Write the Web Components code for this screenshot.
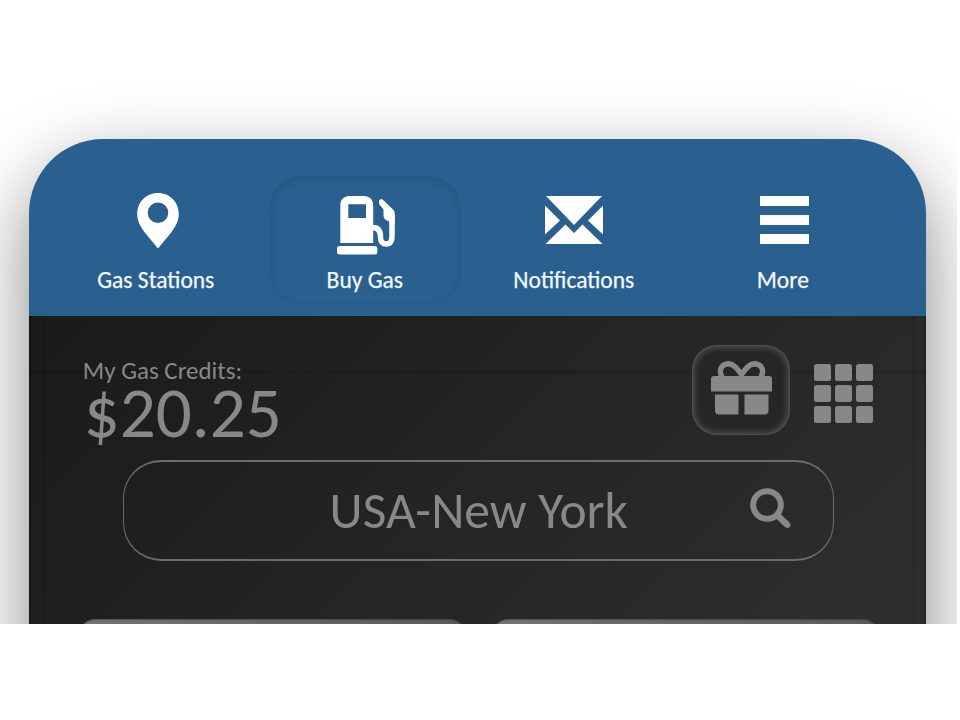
<!DOCTYPE html>
<html lang="en">
<head>
<meta charset="utf-8">
<title>Gas Credits</title>
<style>
  body { margin: 0; background: #fff; font-family: Carlito, Calibri, Lato, sans-serif; }
</style>
</head>
<body>
<gas-app></gas-app>
<script>
const icons = {
  pin: '<svg width="42" height="56" viewBox="0 0 42 56"><path fill="#fff" fill-rule="evenodd" d="M21 0C9.200 0 .2 9 .2 21c0 7 3.200 12.500 7.600 18.500L21 55.500l13.200-16C38.600 33.500 41.800 28 41.800 21 41.800 9 32.800 0 21 0zM21 9.500a10.300 10.300 0 1 1 0 20.600a10.300 10.300 0 0 1 0-20.600z"/></svg>',
  pump: '<svg width="58" height="59" viewBox="0 0 58 59"><path fill="#fff" fill-rule="evenodd" d="M3.300 47V9.500C3.300 3.500 7 0 12.500 0H27c5.500 0 9.200 3.500 9.200 9.500V47zM11.300 8.200V22H29V8.200z"/><rect x="0" y="50" width="40.300" height="8.500" rx="2.500" fill="#fff"/><path d="M36 31.500C42 31.500 43.500 36 43.500 41S45.500 48 49.500 48 55.200 44.500 55 39V19.500L44.500 6.500" fill="none" stroke="#fff" stroke-width="5.500" stroke-linejoin="round"/><path fill="#fff" d="M42 6.500Q41.500 3 45 3L56.500 14Q57.800 15.500 57.800 18V28H52.500V25.500C48.500 24.500 46.500 22.500 46.500 19.500V12.500L42.500 8.500z"/></svg>',
  mail: '<svg width="58" height="48" viewBox="0 0 58 48"><path fill="#fff" d="M1 0H57L29 29zM0 9.500L15 24.500 0 38.500zM58 9.500V38.500L43 24.500zM20.500 28.500L29 37 37.500 28.500 57.500 48H.5z"/></svg>',
  menu: '<svg width="49" height="48" viewBox="0 0 49 48"><path fill="#fff" d="M0 0H49V10H0zM0 19H49V29H0zM0 38H49V48H0z"/></svg>',
  gift: '<svg width="61" height="54" viewBox="0 0 61 54"><path d="M11 16C6.500 7.500 12 2.800 18 2.800 23.500 3 27 9 30.500 13.500 34 9 37.500 3 43 2.800 49 2.800 54.500 7.500 50 16" fill="none" stroke="#888" stroke-width="5.400"/><path fill="#888" d="M3 15H58Q61 15 61 18V30.500H0V18Q0 15 3 15zM4 33.500H27.500V53.500H8Q4 53.500 4 49.500zM33.500 33.500H57.500V49.500Q57.500 53.500 53.500 53.500H33.500z"/></svg>',
  apps: '<svg width="59" height="59" viewBox="0 0 59 59" fill="#888">' + [0, 21, 42].map(y => [0, 21, 42].map(x => `<rect x="${x}" y="${y}" width="17" height="17" rx="2.500"/>`).join('')).join('') + '</svg>',
  search: '<svg width="41" height="41" viewBox="0 0 41 41" fill="none" stroke="#888"><circle cx="17" cy="17" r="13.800" stroke-width="6"/><path d="M27 27L37.500 37" stroke-width="6.500"/><path d="M36 35.500L37.500 37" stroke-width="6" stroke-linecap="round"/></svg>'
};
function define(name, html) {
  customElements.define(name, class extends HTMLElement {
    constructor() {
      super();
      const t = document.createElement('template');
      t.innerHTML = html;
      this.attachShadow({ mode: 'open' }).append(t.content.cloneNode(true));
    }
  });
}
customElements.define('ui-icon', class extends HTMLElement {
  connectedCallback() {
    if (!this.shadowRoot) this.attachShadow({ mode: 'open' }).innerHTML =
      '<style>:host{display:block;line-height:0}svg{display:block}</style>' + icons[this.getAttribute('name')];
  }
});
define('nav-item', `<style>
  :host{display:flex;flex-direction:column;align-items:center;justify-self:center;box-sizing:border-box;width:192px;height:129px;padding-top:16.500px;border-radius:33px;color:#f4f8fb}
  :host([active]){box-shadow:inset 0 3px 8px rgba(10,35,65,.14)}
  .icon{height:67px;display:flex;align-items:flex-start;padding-left:var(--dx,0);padding-top:var(--dy,0);box-sizing:border-box}
  .label{font-size:23.500px;line-height:40px;white-space:nowrap;-webkit-text-stroke:.25px currentColor}
</style><div class="icon"><slot name="icon"></slot></div><div class="label"><slot></slot></div>`);
define('nav-bar', `<style>
  :host{display:grid;grid-template-columns:repeat(4,209px);box-sizing:border-box;height:176.500px;padding:37px 0 0 22.500px;background:#29608f}
</style><slot></slot>`);
define('credit-balance', `<style>
  :host{display:block;color:#888;white-space:nowrap}
  .l{font-size:25px;line-height:26px}
  .v{font-size:71px;line-height:57px;padding-left:1px}
</style><div class="l"><slot name="label"></slot></div><div class="v"><slot></slot></div>`);
define('gift-button', `<style>
  :host{display:flex;justify-content:center;box-sizing:border-box;width:98px;height:90px;padding-top:16px;border-radius:25px;background:#262626;box-shadow:inset 0 0 7px 2px rgba(255,255,255,.22),inset 0 0 2px rgba(255,255,255,.2)}
</style><ui-icon name="gift"></ui-icon>`);
define('search-box', `<style>
  :host{display:grid;grid-template-columns:1fr auto;align-items:center;box-sizing:border-box;width:711px;height:101px;border:solid #6c6c6c;border-width:2px 1.500px;border-radius:38px;padding-right:42px;padding-left:84px;color:#888;font-size:51.500px}
  .t{text-align:center;line-height:60px;white-space:nowrap}
  ui-icon{margin-top:-4px}
</style><div class="t"><slot></slot></div><ui-icon name="search"></ui-icon>`);
define('station-card', `<style>
  :host{display:block;height:180px;border-radius:18px;background:linear-gradient(100deg,#757575,#585858);box-shadow:inset 0 1px 2px rgba(0,0,0,.3)}
</style><slot></slot>`);
define('app-screen', `<style>
  :host{display:block;box-sizing:border-box;height:600px;padding-top:29px;
    background:
      linear-gradient(90deg,transparent,rgba(0,0,0,.16) 50%,transparent) 12px 0/5px 100% no-repeat,
      linear-gradient(90deg,transparent,rgba(0,0,0,.16) 50%,transparent) 882px 0/5px 100% no-repeat,
      linear-gradient(transparent,rgba(0,0,0,.16) 50%,transparent) 0 53px/100% 5px no-repeat,
      linear-gradient(90deg,rgba(0,0,0,.35),transparent 3px,transparent 895px,rgba(0,0,0,.35)),
      linear-gradient(135deg,#1a1a1a 0,#2f2f2f 860px)}
  .top{display:grid;grid-template-columns:1fr auto auto;column-gap:24px;height:115.500px;padding:0 53px 0 54px;align-items:start}
  credit-balance{margin-top:13px} .apps{margin-top:19.500px}
  search-box{margin-left:94px}
  .cards{display:grid;grid-template-columns:389px 389px;gap:24px;margin:58px 0 0 49px}
</style>
<div class="top"><credit-balance><span slot="label">My Gas Credits:</span>$20.25</credit-balance><gift-button></gift-button><ui-icon class="apps" name="apps"></ui-icon></div>
<search-box>USA-New York</search-box>
<div class="cards"><station-card></station-card><station-card></station-card></div>`);
define('gas-app', `<style>
  :host{display:block;box-sizing:border-box;width:957px;height:624px;padding:139.200px 0 0 28.800px;overflow:hidden}
  .phone{width:897.500px;height:780px;border-radius:74px 74px 0 0;box-shadow:0 30px 78px rgba(0,0,0,.48)}
  .clip{border-radius:74px 74px 0 0;overflow:hidden}
</style>
<div class="phone"><div class="clip">
<nav-bar>
  <nav-item style="--dx:5px"><ui-icon slot="icon" name="pin"></ui-icon>Gas Stations</nav-item>
  <nav-item active style="--dx:2px;--dy:3px"><ui-icon slot="icon" name="pump"></ui-icon>Buy Gas</nav-item>
  <nav-item style="--dx:1px;--dy:3px"><ui-icon slot="icon" name="mail"></ui-icon>Notifications</nav-item>
  <nav-item style="--dx:3px;--dy:3px"><ui-icon slot="icon" name="menu"></ui-icon>More</nav-item>
</nav-bar>
<app-screen></app-screen>
</div></div>`);
</script>
</body>
</html>
